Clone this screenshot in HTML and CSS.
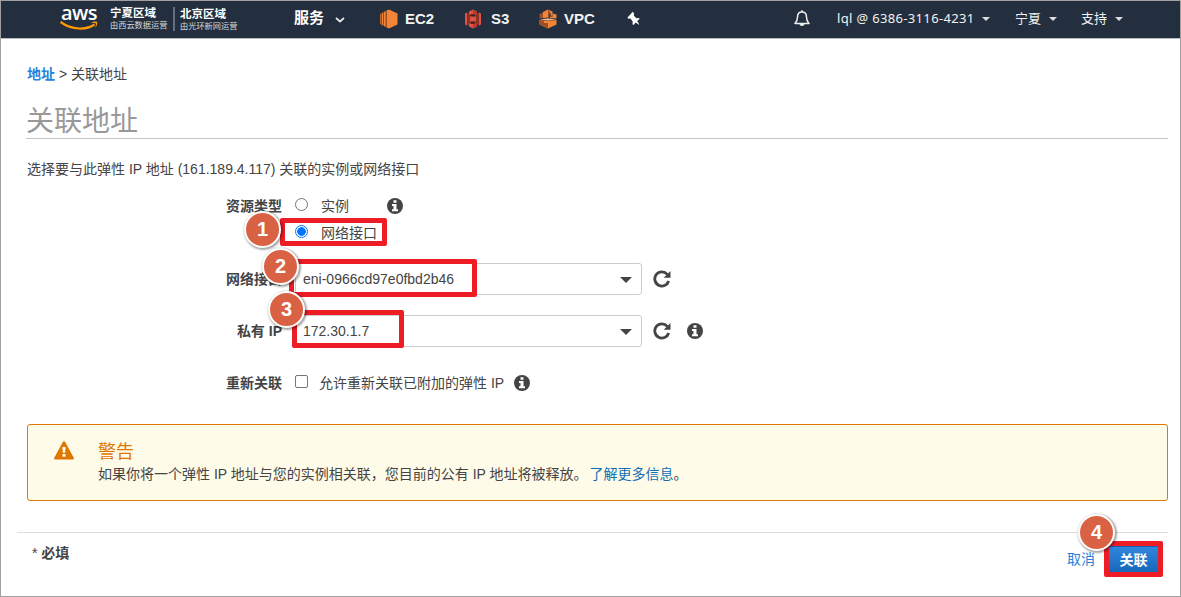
FILE: index.html
```html
<!DOCTYPE html>
<html lang="zh-CN">
<head>
<meta charset="utf-8">
<title>关联地址</title>
<link rel="stylesheet" href="styles.css">
</head>
<body>
<div class="frame">
  <header class="topbar">
    <div class="aws-logo">
      <span class="aws-word">aws</span>
      <svg width="40" height="9" viewBox="0 14.500 40 9">
        <path d="M.5 15.500C12 24 27 23.500 34.500 18" fill="none" stroke="#f90" stroke-width="2.200"/>
        <path d="M31 16.200c3-1.400 5.500-1.200 6-.700s.4 3.500-2 6c1-2.700 1.200-4 .8-4.500s-2-.7-4.800-.8z" fill="#f90"/>
      </svg>
    </div>
    <div class="region"><strong>宁夏区域</strong><small>由西云数据运营</small></div>
    <div class="region region-second"><strong>北京区域</strong><small>由光环新网运营</small></div>
    <div class="nav-services">服务</div>
    <svg class="chevron" width="10" height="6" viewBox="0 0 10 6"><path d="M1 1l4 3.500L9 1" fill="none" stroke="#e8e8e8" stroke-width="1.700"/></svg>
    <svg class="svc-icon ec2-icon" width="18" height="20" viewBox="0 0 18 20">
      <path d="M9 .5l8.500 4v11L9 19.500l-2.500-1v-17z" fill="#f58536"/>
      <path d="M3.800 3l2 -.9v15.800l-2-.9zM1.900 4.100l1.200-.5v12.800l-1.200-.5zM.3 5l.9-.4v10.800L.3 15z" fill="#f58536"/>
      <path d="M5.800 2.100l.9-.5v16.800l-.9-.5zM3.100 3.600l.7-.4v13.600l-.7-.4zM1.200 4.600l.7-.4v11.600l-.7-.4z" fill="#9d5025"/>
    </svg>
    <span class="svc ec2">EC2</span>
    <svg class="svc-icon s3-icon" width="18" height="20" viewBox="0 0 18 20">
      <path d="M1 4.500L3 3.500v13l-2-1zM15 3.500l2 1v11l-2 1z" fill="#e05243"/>
      <path d="M3 3.500l4 2v9l-4 2zM11 5.500l4-2v13l-4-2z" fill="#8c3123"/>
      <path d="M9 .5l4 2V6L9 5 5 6V2.500zM9 19.500l4-2V14l-4 1-4-1v3.500z" fill="#e05243"/>
      <path d="M5 6l4-1 4 1-4 .8zM5 14l4 1 4-1-4-.8z" fill="#5e1f18"/>
      <path d="M6 7.500h6v5H6z" fill="#e05243"/>
      <path d="M9 .5l4 2V6L9 5zM9 15l4-1v3.500l-4 2z" fill="#b93b30"/>
    </svg>
    <span class="svc s3">S3</span>
    <svg class="svc-icon vpc-icon" width="18" height="20" viewBox="0 0 18 20">
      <path d="M.5 5L5 3v5.800l-4.500.7z" fill="#9d5025"/>
      <path d="M4 3L9 .5l4.500 2v4l-2 .3V3.500L10 4v4.500L4 9z" fill="#f58536"/>
      <path d="M9 .5l1.500.7V8H9z" fill="#9d5025"/>
      <path d="M13.500 4.500l4 1v4l-6.500-.6V7.500l2.500.3z" fill="#f58536"/>
      <path d="M.5 11l8.500.8 8.500-.8v4.500l-8.500 4-8.500-4z" fill="#f58536"/>
      <path d="M.5 11l4.500.5v6l-4.500-2zM5 14h4v5.500l-4-2z" fill="#9d5025"/>
      <path d="M.5 10.300l8.500-.7 8.500.7-8.500 1.300z" fill="#fbbf93"/>
    </svg>
    <span class="svc vpc">VPC</span>
    <svg class="pin" width="14" height="15" viewBox="0 0 14 15"><path d="M5.700.7l1.400 1.700-.3 2.200 2.600 2.600 2.600-.3.600 1.200-2.400 1.900 2.300 3.900-4-2.400-1.800 2.400-1.200-.6.200-2.900-2.200-2.900-2.200.2L.5 6.500z" fill="#fff"/></svg>
    <svg class="bell" width="18" height="19" viewBox="0 0 18 19"><path d="M2 14.500c2-2 2.500-3.500 2.500-6.500 0-3 1.800-5 4.500-5s4.500 2 4.500 5c0 3 .5 4.500 2.500 6.500z" fill="none" stroke="#eee" stroke-width="1.500" stroke-linejoin="round"/><path d="M9 1.200V3" stroke="#eee" stroke-width="1.600"/><path d="M6.500 15h5a2.500 2 0 0 1-5 0z" fill="#eee"/></svg>
    <span class="menu account">lql @ 6386-3116-4231</span><i class="menu-caret"></i>
    <span class="menu region-menu">宁夏</span><i class="menu-caret"></i>
    <span class="menu support">支持</span><i class="menu-caret"></i>
  </header>

  <main class="content">
    <nav class="crumbs"><a>地址</a> &gt; 关联地址</nav>
    <h1 class="title">关联地址</h1>
    <p class="intro">选择要与此弹性 IP 地址 (161.189.4.117) 关联的实例或网络接口</p>

    <div class="row radio-first">
      <span class="label">资源类型</span>
      <span class="radio"></span><span class="option">实例</span>
      <svg class="info info-type" width="16" height="16" viewBox="0 0 16 16"><circle cx="8" cy="8" r="8" fill="#444"/><path d="M6.500 2.300h3v2.400h-3zM5 6h4.500v5.300H11v1.900H5v-1.900h1.500V7.900H5z" fill="#fff"/></svg>
    </div>
    <div class="row radio-second">
      <span class="label"></span>
      <span class="radio radio-on"></span><span class="option">网络接口</span>
    </div>
    <div class="row field">
      <span class="label">网络接口</span>
      <div class="select"><span>eni-0966cd97e0fbd2b46</span><i class="caret"></i></div>
      <svg class="refresh" width="18" height="18" viewBox="0 0 18 18"><path d="M14.300 4.300A7.100 7.100 0 1 0 15.700 11" fill="none" stroke="#444" stroke-width="2.800"/><path d="M17.500 1v6.800h-6.800z" fill="#444"/></svg>
    </div>
    <div class="row field">
      <span class="label">私有 IP</span>
      <div class="select"><span>172.30.1.7</span><i class="caret"></i></div>
      <svg class="refresh" width="18" height="18" viewBox="0 0 18 18"><path d="M14.300 4.300A7.100 7.100 0 1 0 15.700 11" fill="none" stroke="#444" stroke-width="2.800"/><path d="M17.500 1v6.800h-6.800z" fill="#444"/></svg>
      <svg class="info info-ip" width="16" height="16" viewBox="0 0 16 16"><circle cx="8" cy="8" r="8" fill="#444"/><path d="M6.500 2.300h3v2.400h-3zM5 6h4.500v5.300H11v1.900H5v-1.900h1.500V7.900H5z" fill="#fff"/></svg>
    </div>
    <div class="row field">
      <span class="label">重新关联</span>
      <span class="checkbox"></span><span class="check-text">允许重新关联已附加的弹性 IP</span>
      <svg class="info info-check" width="16" height="16" viewBox="0 0 16 16"><circle cx="8" cy="8" r="8" fill="#444"/><path d="M6.500 2.300h3v2.400h-3zM5 6h4.500v5.300H11v1.900H5v-1.900h1.500V7.900H5z" fill="#fff"/></svg>
    </div>

    <section class="alert">
      <svg class="warn" width="20" height="19" viewBox="0 0 20 19"><path d="M10 .3c.5 0 .9.300 1.200.8l8.500 15.700c.5.900 0 1.700-1 1.700H1.300c-1 0-1.500-.8-1-1.700L8.800 1.100c.3-.5.700-.8 1.200-.8z" fill="#e07700"/><path d="M8.300 6h3.400l-.5 5.800H8.800zM8.500 13h3v2.700h-3z" fill="#fffbe9"/></svg>
      <div>
        <h2 class="alert-title">警告</h2>
        <p class="alert-text">如果你将一个弹性 IP 地址与您的实例相关联，您目前的公有 IP 地址将被释放。<a>了解更多信息</a>。</p>
      </div>
    </section>

    <footer class="footer">
      <span class="required"><span class="star">*</span> 必填</span>
      <a class="cancel">取消</a>
      <button class="submit">关联</button>
    </footer>
  </main>

  <div class="mark mark-radio"></div>
  <div class="mark mark-eni"></div>
  <div class="mark mark-ip"></div>
  <div class="mark mark-submit"></div>
  <div class="step step-1">1</div>
  <div class="step step-2">2</div>
  <div class="step step-3">3</div>
  <div class="step step-4">4</div>
</div>
</body>
</html>
```
FILE: styles.css
```css
* { box-sizing: border-box; }
body {
  margin: 0;
  background: #fff;
  color: #444;
  font: 14px/22px "Liberation Sans", "Noto Sans CJK SC", sans-serif;
}
h1, h2, p { margin: 0; font-weight: 400; }
svg { display: block; flex: none; }
a { color: #146eb4; }

.frame {
  position: relative;
  width: 1181px;
  height: 597px;
  border: 1px solid #a0a0a0;
  overflow: hidden;
}

.topbar {
  display: flex;
  align-items: center;
  height: 38px;
  padding: 0 0 3px 59px;
  background: #232f3e;
  border-bottom: 1px solid #b8bcc0;
  color: #fff;
  white-space: nowrap;
}
.aws-logo { display: flex; flex-direction: column; width: 40px; height: 34px; padding-top: 1px; }
.aws-word { height: 19px; padding-left: 1px; font: 600 20px/22px "Open Sans", sans-serif; letter-spacing: -.6px; }
.region { display: flex; flex-direction: column; width: 63px; margin-left: 10px; padding-top: 1px; }
.region strong { font-size: 11.500px; line-height: 14px; font-weight: 700; }
.region small { font-size: 8.200px; line-height: 12px; color: #d5d9dd; }
.region-second { width: 72px; height: 24px; margin: 1px 0 0; padding: 0 0 0 5px; border-left: 2px solid #647080; }
.nav-services { width: 31px; margin-left: 49px; font-size: 15px; font-weight: 700; line-height: 20px; }
.chevron { margin: 3px 0 0 10px; }
.svc { font-size: 15px; font-weight: 700; color: #f2f2f2; margin-top: 1px; }
.svc-icon { margin-top: 1px; }
.ec2-icon { margin-left: 35px; }
.ec2 { width: 30px; margin-left: 7px; }
.s3-icon { margin-left: 29px; }
.s3 { width: 18px; margin-left: 9px; }
.vpc-icon { margin-left: 30px; }
.vpc { width: 31px; margin-left: 7px; }
.pin { margin-left: 32px; }
.bell { margin-left: 152px; margin-top: 1px; }
.menu { font: 13px/22px "Noto Sans", "Noto Sans CJK SC", sans-serif; color: #f2f2f2; margin-top: -1px; }
.account { width: 137px; margin-left: 26px; letter-spacing: .34px; }
.region-menu { width: 26px; margin-left: 25px; }
.support { width: 26px; margin-left: 24px; }
.menu-caret { border: 4px solid transparent; border-top-color: #ddd; border-bottom: 0; margin: 1px 0 0 8px; }

.content { padding: 24px 12px 0 26px; }
.crumbs a { color: #2a7fd8; font-weight: 700; }
.title { height: 40px; margin: 14px 0 0 -1px; font-size: 28px; line-height: 46px; color: #999; border-bottom: 1px solid #c4c4c4; }
.intro { margin-top: 19px; }

.row { display: flex; align-items: center; }
.label { width: 255px; margin-right: 13px; text-align: right; font-weight: 700; }
.radio-first { height: 28px; margin-top: 12px; }
.radio-second { height: 26px; }
.radio { width: 13px; height: 13px; margin: -3px 13px 0 0; border: 1px solid #767676; border-radius: 50%; }
.radio-on { border-color: #0075ff; background: radial-gradient(circle, #0075ff 0 4px, #fff 4.600px); }
.info-type { margin-left: 38px; }
.field { height: 32px; margin-top: 20px; }
.radio-second + .field { margin-top: 17px; }
.select {
  display: flex;
  align-items: center;
  justify-content: space-between;
  width: 347px;
  height: 32px;
  padding: 0 9px 0 7px;
  border: 1px solid #ccc;
  border-radius: 3px;
}
.caret { border: 6px solid transparent; border-top-color: #444; border-bottom: 0; margin-top: 2px; }
.refresh { margin-left: 11px; }
.info-ip { margin-left: 16px; }
.checkbox { width: 13px; height: 13px; margin: -3px 11px 0 0; border: 1px solid #767676; border-radius: 2px; }
.info-check { margin-left: 10px; }

.alert {
  display: flex;
  gap: 24px;
  height: 77px;
  margin-top: 25px;
  padding: 15px 26px;
  background: #fffbe9;
  border: 1px solid #e07700;
  border-radius: 3px;
}
.warn { margin-top: 1px; }
.alert-title { font-size: 18px; line-height: 24px; color: #e07700; }
.alert-text { margin-top: -1px; }
.alert-text a { margin-left: 2px; }

.footer { display: flex; height: 60px; margin: 31px 0 0 -10px; border-top: 1px solid #ddd; }
.required { flex: 1; margin: 9px 0 0 15px; font-weight: 700; }
.star { font-weight: 400; }
.cancel { margin: 15px 13px 0 0; color: #2a7fd8; }
.submit {
  width: 51px;
  height: 28px;
  margin: 13px 9px 0 0;
  padding: 0;
  border: 1px solid #1a61ad;
  background: linear-gradient(#2f86dc, #1767bb);
  color: #fff;
  font: 700 14px/22px "Liberation Sans", "Noto Sans CJK SC", sans-serif;
}

.mark { position: absolute; border: 5px solid #ee1c25; border-radius: 2px; }
.mark-radio { left: 279px; top: 217px; width: 107px; height: 28px; }
.mark-eni { left: 288px; top: 258px; width: 188px; height: 38px; }
.mark-ip { left: 291px; top: 309px; width: 112px; height: 38px; }
.mark-submit { left: 1103px; top: 540px; width: 59px; height: 36px; }
.step {
  position: absolute;
  width: 37px;
  height: 37px;
  border: 2px solid #fff;
  border-radius: 50%;
  background: #d96244;
  box-shadow: 1px 1px 2px 1px rgba(0, 0, 0, .35);
  color: #fff;
  font: 700 20px/32px "Liberation Sans", sans-serif;
  text-align: center;
}
.step-1 { left: 243px; top: 210px; }
.step-2 { left: 261px; top: 247px; }
.step-3 { left: 267px; top: 290px; }
.step-4 { left: 1077px; top: 513px; }
```
